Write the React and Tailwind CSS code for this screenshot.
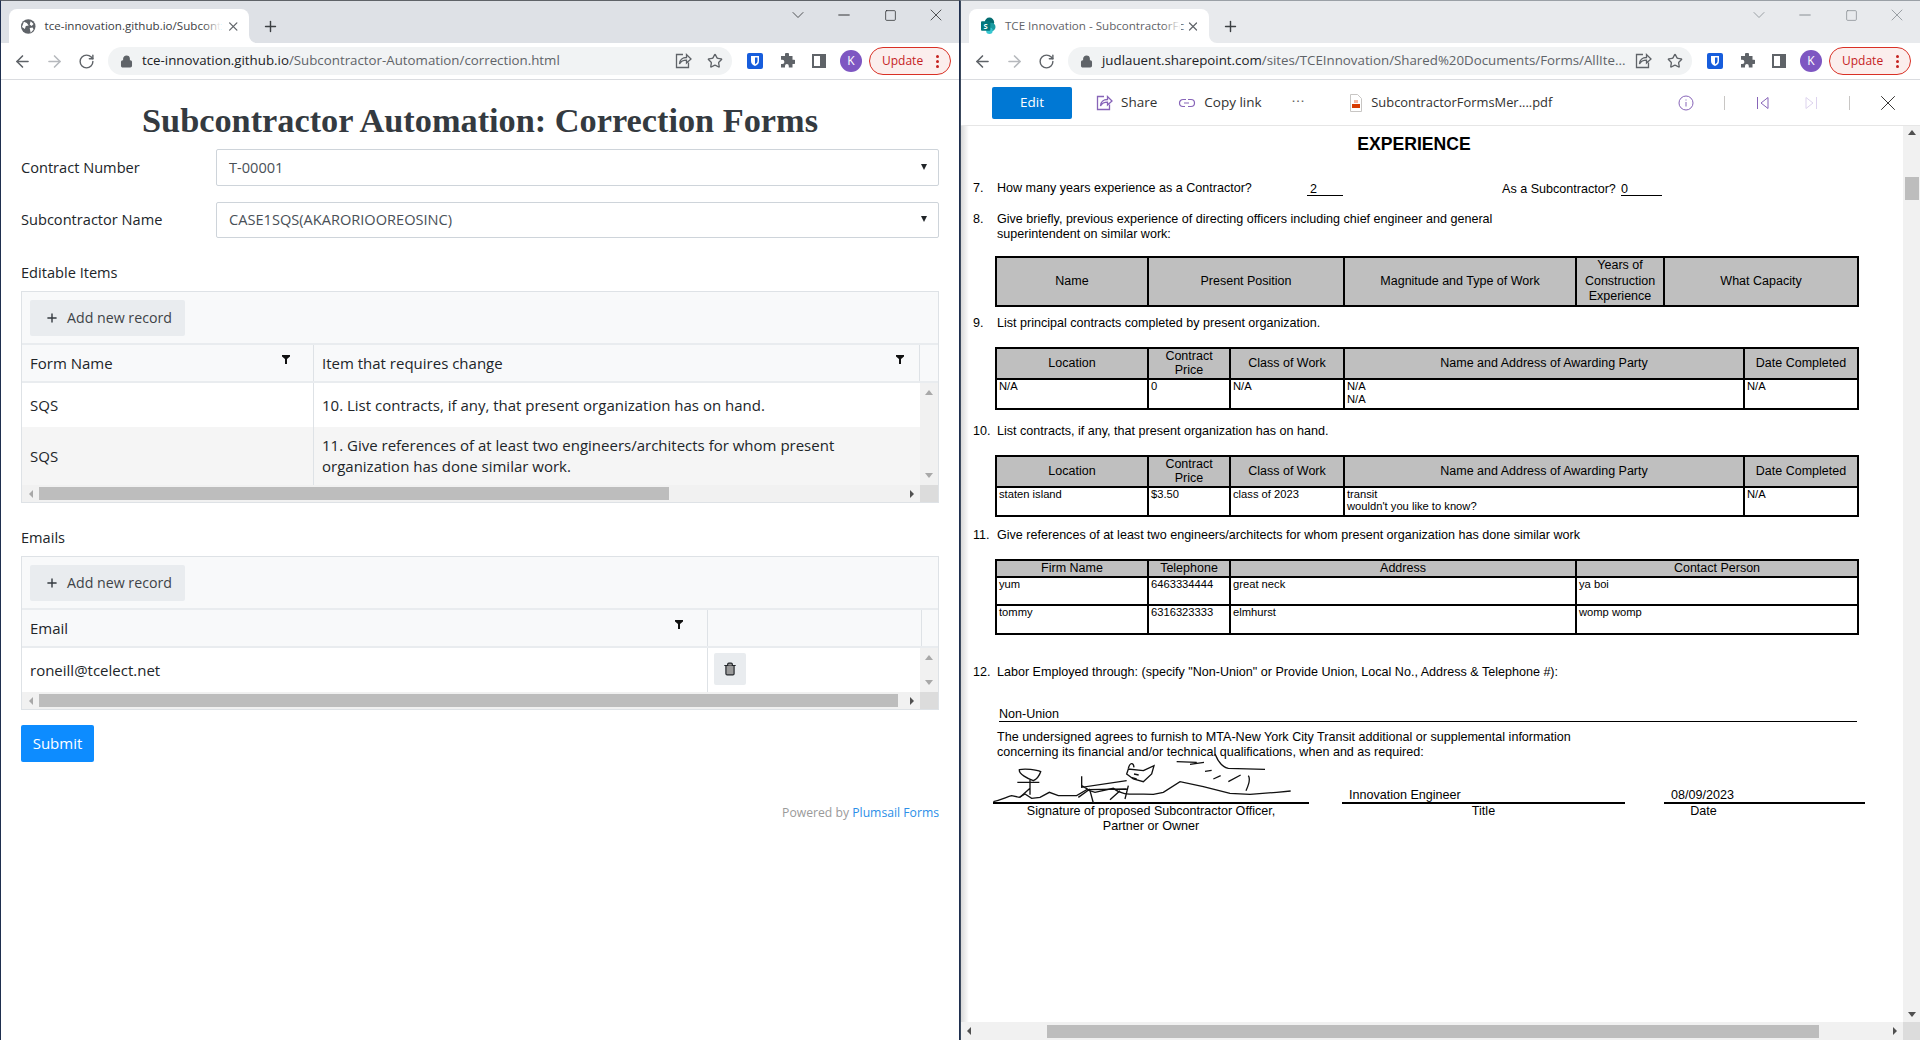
import { ArrowLeft, ArrowRight, RotateCw, Lock, Star, X, Plus, ChevronDown, Minus, Square, Trash2 } from 'lucide-react';

const UI = "font-['Open_Sans','Noto_Sans',sans-serif]";

function Flare({ side, color }) {
  // little inverted corners at the foot of the active tab
  return (
    <span className={side === 'l' ? 'absolute bottom-0 -left-[8px] w-[8px] h-[8px] bg-white' : 'absolute bottom-0 -right-[8px] w-[8px] h-[8px] bg-white'}>
      <span className={side === 'l' ? `block w-full h-full rounded-br-[8px] ${color}` : `block w-full h-full rounded-bl-[8px] ${color}`} />
    </span>
  );
}

function ShareIcon({ className = 'text-[#5f6368]' }) {
  return (
    <svg width="18" height="18" viewBox="0 0 18 18" fill="none" stroke="currentColor" strokeWidth="1.3" className={className}>
      <path d="M9 2.500h-6.500v13h12v-5" />
      <path d="M5.500 12c0-4 3-6.500 7-6.500v-3l4.500 4.500-4.500 4v-2.800c-3 0-5.500 1-7 3.800z" />
    </svg>
  );
}

function Chrome({ active, favicon, tabText, host, path }) {
  const bar = active ? 'bg-[#dee1e6]' : 'bg-[#e8eaed]';
  const ctl = active ? 'text-[#202124]' : 'text-[#80868b]';
  return (
    <div className={UI}>
      <div className={`${bar} h-[42px] flex items-end pl-[8px] relative`}>
        <div className="relative w-[240px] h-[34px] bg-white rounded-t-[8px] flex items-center pl-[12px] pr-[9px]">
          <Flare side="r" color={bar} />
          {favicon}
          <span className={`relative ml-[9px] w-[176px] whitespace-nowrap text-[11.6px] ${active ? 'text-[#3c4043]' : 'text-[#5f6368]'}`}>
            {tabText}
            <span className="absolute right-0 top-0 bottom-0 w-[18px] bg-gradient-to-r from-transparent to-white" />
          </span>
          <X size={15} strokeWidth={2} className="ml-[5px] text-[#5f6368]" />
        </div>
        <Plus size={17} strokeWidth={2} className="ml-[13px] mb-[8px] text-[#3c4043]" />
        <div className={`ml-auto mb-[18px] flex items-center ${ctl}`}>
          <span className="w-[46px] flex justify-center"><ChevronDown size={20} strokeWidth={0.9} /></span>
          <span className="w-[46px] flex justify-center"><Minus size={18} strokeWidth={1.2} /></span>
          <span className="w-[46px] flex justify-center"><Square size={13} strokeWidth={1.3} /></span>
          <span className="w-[46px] flex justify-center"><X size={20} strokeWidth={0.9} /></span>
        </div>
      </div>
      <div className="h-[36px] bg-white flex items-center pl-[12px]">
        <ArrowLeft size={19} strokeWidth={2} className="text-[#5f6368]" />
        <ArrowRight size={19} strokeWidth={2} className="ml-[13px] text-[#b6b9bd]" />
        <RotateCw size={17} strokeWidth={2} className="ml-[14px] text-[#5f6368]" />
        <div className="ml-[13px] w-[624px] h-[28px] rounded-full bg-[#f1f3f4] flex items-center pl-[12px]">
          <Lock size={13} strokeWidth={2.4} fill="#5f6368" className="text-[#5f6368] mr-[9px]" />
          <span className="w-[532px] whitespace-nowrap text-[13.3px] text-[#5f6368]">
            <span className="text-[#202124]">{host}</span>{path}
          </span>
          <ShareIcon />
          <Star size={16} strokeWidth={2} className="ml-[15px] text-[#5f6368]" />
        </div>
        <div className="ml-[7px] w-[32px] flex justify-center">
          <span className="w-[16px] h-[16px] rounded-[2px] bg-[#175ddc] flex items-center justify-center">
            <svg width="10" height="12" viewBox="0 0 10 12"><path d="M1 1h8v5c0 3-2 4-4 5-2-1-4-2-4-5z" fill="#fff" /><path d="M5 2.500h2.500v3.500c0 1.500-1 2.500-2.500 3.200z" fill="#175ddc" /></svg>
          </span>
        </div>
        <div className="w-[32px] flex justify-center">
          <svg width="16" height="16" viewBox="0 0 16 16" fill="#5f6368"><path d="M6 1.500a2 2 0 0 1 4 0V3h3.500v3.800H15a2.100 2.100 0 0 1 0 4.200h-1.500v3.500H9.800V13a1.900 1.900 0 0 0-3.800 0v1.500H2V11h1.300a2.100 2.100 0 0 0 0-4.200H2V3h4z" /></svg>
        </div>
        <div className="w-[32px] flex justify-center">
          <span className="w-[14px] h-[14px] border-[2px] border-[#5f6368] border-r-[6px] block" />
        </div>
        <div className="w-[32px] flex justify-center">
          <span className="w-[22px] h-[22px] rounded-full bg-[#7e57c2] text-white text-[12px] flex items-center justify-center">K</span>
        </div>
        <div className="ml-[2px] w-[82px] h-[28px] rounded-full border border-[#d93025] bg-[#fbeeed] flex items-center pl-[12px] text-[12px] text-[#c5221f]">
          Update
          <span className="ml-[13px] flex flex-col gap-[2px]">
            <span className="w-[3px] h-[3px] rounded-full bg-[#c5221f]" />
            <span className="w-[3px] h-[3px] rounded-full bg-[#c5221f]" />
            <span className="w-[3px] h-[3px] rounded-full bg-[#c5221f]" />
          </span>
        </div>
      </div>
      <div className="h-[1px] bg-[#dadce0]" />
    </div>
  );
}

function Funnel({ className = '' }) {
  return (
    <svg width="8" height="9" viewBox="0 0 8 9" className={className}><path d="M0 0h8v1.500L5 4v5H3V4L0 1.500z" fill="#111" /></svg>
  );
}

function Select({ value, className }) {
  return (
    <div className={`flex-1 border border-[#ced4da] rounded-[2px] flex items-center pl-[12px] pr-[11px] text-[#495057] ${className}`}>
      <span>{value}</span>
      <span className="ml-auto mb-[2px] w-0 h-0 border-x-[3.5px] border-x-transparent border-t-[6px] border-t-[#212529]" />
    </div>
  );
}

function Tri({ dir }) {
  const shapes = {
    up: 'border-x-[4px] border-x-transparent border-b-[5px] border-b-[#a8a8a8]',
    down: 'border-x-[4px] border-x-transparent border-t-[5px] border-t-[#a8a8a8]',
    left: 'border-y-[4px] border-y-transparent border-r-[4px] border-r-[#a8a8a8]',
    right: 'border-y-[4px] border-y-transparent border-l-[4px] border-l-[#505050]',
  };
  return <span className={`block w-0 h-0 ${shapes[dir]}`} />;
}

function HScroll({ thumb }) {
  return (
    <div className="h-[17px] flex bg-[#f1f1f1]">
      <div className="flex-1 flex items-center relative pl-[7px] pr-[6px]">
        <Tri dir="left" />
        <div className="ml-[6px] h-[13px] bg-[#bdbdbd]" style={{ width: thumb }} />
        <span className="ml-auto"><Tri dir="right" /></span>
      </div>
      <div className="w-[18px] bg-[#dcdcdc]" />
    </div>
  );
}

function AddRecord() {
  return (
    <div className="h-[53px] pt-[8px] pl-[8px] bg-[#f8f9fa] border-b-2 border-[#e9ecef]">
      <div className="w-[155px] h-[36px] bg-[#e9ecef] rounded-[2px] flex items-center pl-[15px] text-[14.2px] text-[#3e4347]">
        <Plus size={14} strokeWidth={2.4} className="text-[#343a40]" />
        <span className="ml-[8px]">Add new record</span>
      </div>
    </div>
  );
}

function VScroll({ height }) {
  return (
    <div className="w-[18px] bg-[#f1f1f1] flex flex-col items-center justify-between py-[7px]" style={{ height }}>
      <Tri dir="up" />
      <Tri dir="down" />
    </div>
  );
}

function FormSide() {
  return (
    <div className={`flex-1 px-[20px] pt-[19px] bg-white text-[16px] text-[#212529] ${UI}`}>
      <h1 className="text-center font-['Liberation_Serif',serif] font-bold text-[34.3px] leading-[43px] text-[#343a40]">Subcontractor Automation: Correction Forms</h1>
      <div className="mt-[7px] flex items-center">
        <span className="w-[195px] text-[14.6px]">Contract Number</span>
        <Select value="T-00001" className="h-[37px] text-[14.6px]" />
      </div>
      <div className="mt-[16px] flex items-center">
        <span className="w-[195px] text-[14.6px]">Subcontractor Name</span>
        <Select value="CASE1SQS(AKARORIOOREOSINC)" className="h-[36px] text-[14.6px]" />
      </div>

      <div className="mt-[22px] h-[24px] leading-[24px] text-[14.6px]">Editable Items</div>
      <div className="mt-[7px] border border-[#dee2e6] text-[15px] leading-[26px]">
        <AddRecord />
        <div className="h-[38px] flex bg-[#f8f9fa] border-b-2 border-[#e9ecef]">
          <div className="w-[292px] pl-[8px] border-r border-[#dee2e6] flex items-center relative">
            Form Name
            <Funnel className="absolute right-[23px] top-[10px]" />
          </div>
          <div className="w-[606px] pl-[8px] border-r border-[#dee2e6] flex items-center relative">
            Item that requires change
            <Funnel className="absolute right-[15px] top-[10px]" />
          </div>
        </div>
        <div className="flex">
          <div className="w-[898px]">
            <div className="h-[44px] flex items-center">
              <div className="w-[292px] h-full pl-[8px] flex items-center border-r border-[#dee2e6]">SQS</div>
              <div className="pl-[8px]">10. List contracts, if any, that present organization has on hand.</div>
            </div>
            <div className="h-[58px] flex items-center bg-[#f5f5f5]">
              <div className="w-[292px] h-full pl-[8px] flex items-center border-r border-[#dee2e6]">SQS</div>
              <div className="pl-[8px] w-[606px] leading-[21px]">11. Give references of at least two engineers/architects for whom present organization has done similar work.</div>
            </div>
          </div>
          <VScroll height={102} />
        </div>
        <HScroll thumb={630} />
      </div>

      <div className="mt-[22px] h-[24px] leading-[24px] text-[14.6px]">Emails</div>
      <div className="mt-[7px] border border-[#dee2e6] text-[15px] leading-[26px]">
        <AddRecord />
        <div className="h-[38px] flex bg-[#f8f9fa] border-b-2 border-[#e9ecef]">
          <div className="w-[686px] pl-[8px] border-r border-[#dee2e6] flex items-center relative">
            Email
            <Funnel className="absolute right-[24px] top-[10px]" />
          </div>
          <div className="w-[214px] border-r border-[#dee2e6]" />
        </div>
        <div className="flex">
          <div className="w-[686px] h-[44px] pl-[8px] flex items-center border-r border-[#dee2e6]">roneill@tcelect.net</div>
          <div className="w-[212px] h-[44px] pl-[6px] pt-[5px]">
            <div className="w-[32px] h-[32px] bg-[#e9ecef] rounded-[2px] flex items-center justify-center">
              <Trash2 size={14} strokeWidth={2} fill="#9a9a9a" className="text-[#212529]" />
            </div>
          </div>
          <VScroll height={44} />
        </div>
        <HScroll thumb={859} />
      </div>

      <button className="mt-[15px] block w-[73px] h-[37px] rounded-[2px] bg-[#0d8cff] text-white text-[15px] font-medium">Submit</button>
      <div className="mt-[39px] h-[24px] leading-[24px] text-right text-[12.2px] text-[#9a9a9a]">
        Powered by <span className="text-[#2b8fe8]">Plumsail Forms</span>
      </div>
    </div>
  );
}

function PdfTable({ cols, rows, head, headH, bodyH, leading = 'leading-[13.5px]' }) {
  return (
    <table className="ml-[22px] w-[862px] table-fixed border-collapse">
      <colgroup>{cols.map((w, i) => <col key={i} style={{ width: w }} />)}</colgroup>
      <thead>
        <tr style={{ height: headH }} className="bg-[#bfbfbf]">
          {head.map((h, i) => (
            <th key={i} className="border-2 border-black text-center font-normal text-[12.5px] leading-[14.5px]">{h}</th>
          ))}
        </tr>
      </thead>
      <tbody>
        {rows.map((r, ri) => (
          <tr key={ri} style={{ height: bodyH }}>
            {r.map((c, i) => <td key={i} className={`border-2 border-black align-top px-[2px] text-[11.2px] ${leading} whitespace-pre-line`}>{c}</td>)}
          </tr>
        ))}
      </tbody>
    </table>
  );
}

function Q({ n, children, className = '' }) {
  return (
    <div className={`flex leading-[15px] ${className}`}>
      <span className="w-[24px]">{n}</span>
      <div className="flex-1">{children}</div>
    </div>
  );
}

function Signature() {
  return (
    <svg width="360" height="110" viewBox="0 0 1080 330" fill="none" stroke="#111" strokeWidth="4" className="absolute left-[7px] top-[-31px]">
      <path d="M40 218c25-6 40-14 55-18l23 5 17-10 20 13 25-3 28-15 27 10h55l30-18 25 8 55-12c30 25 60 15 120 18l30-6 50-32 70 15 80 20 60 3 80-6 42-4" />
      <path d="M118 122c17-4 52 0 64 6-4 12-12 22-22 27-15-5-45-20-42-33z" />
      <path d="M112 160h66M150 152v45M150 178l-30 27" />
      <path d="M305 142v33l135-20M305 170l20 12 115-2M330 180l-35 25M330 185l10 37M445 170l-10 40M420 185l-30 27" />
      <path d="M490 125l32-15-7 25-25 23-30-8-20-15 5-15 45 5z" />
      <path d="M445 118c5-18 15-18 17-3M462 135l14 3M470 150l-14-4" />
      <path d="M705 75c10 25 25 40 40 43l110 3" />
      <path d="M590 98l60 2M630 106l42-6M675 127l20-3M700 150l22-10M745 158l37-20M805 140c7 10 0 30-7 45" />
    </svg>
  );
}

function PdfSide() {
  const headA = ['Location', 'Contract\nPrice', 'Class of Work', 'Name and Address of Awarding Party', 'Date Completed'].map(t => <span className="whitespace-pre-line">{t}</span>);
  const colsA = [152, 82, 114, 400, 114];
  return (
    <div className={`flex-1 flex flex-col min-h-0 bg-white ${UI}`}>
      <div className="h-[46px] border-b border-[#e6e6e6] flex items-center pl-[31px] text-[13.5px] text-[#323130]">
        <div className="w-[80px] h-[32px] rounded-[2px] bg-[#0078d4] text-white flex items-center justify-center">Edit</div>
        <ShareIcon className="ml-[23px] text-[#8764b8]" />
        <span className="ml-[8px]">Share</span>
        <svg width="18" height="14" viewBox="0 0 18 14" fill="none" stroke="#8764b8" strokeWidth="1.2" className="ml-[21px]">
          <path d="M8 3.500H5a3.500 3.500 0 0 0 0 7h2" /><path d="M6 7h5M10 3.500h3a3.500 3.500 0 0 1 0 7h-3" />
        </svg>
        <span className="ml-[8px]">Copy link</span>
        <span className="ml-[30px] mb-[2px] tracking-[1px] text-[#605e5c]">···</span>
        <svg width="14" height="18" viewBox="0 0 14 18" className="ml-[44px]">
          <path d="M1.500.5h7l4 4v13h-11z" fill="#fff" stroke="#c8c6c4" />
          <rect x="3" y="10" width="8" height="4" fill="#d83b01" />
          <rect x="5" y="6" width="4" height="3" fill="#f3b7a5" />
        </svg>
        <span className="ml-[8px] text-[12.9px]">SubcontractorFormsMer....pdf</span>
        <div className="ml-auto pr-[19px] flex items-center">
          <svg width="16" height="16" viewBox="0 0 16 16" fill="none" stroke="#8764b8">
            <circle cx="8" cy="8" r="7" /><path d="M8 7v4.500M8 4.500v1" />
          </svg>
          <span className="ml-[30px] w-[1px] h-[14px] bg-[#c8c6c4]" />
          <svg width="14" height="14" viewBox="0 0 14 14" fill="none" stroke="#8764b8" className="ml-[31px]">
            <path d="M1.500 1v12M12 1.500L5 7l7 5.500z" />
          </svg>
          <svg width="14" height="14" viewBox="0 0 14 14" fill="none" stroke="#ddd3ee" className="ml-[34px]">
            <path d="M12.500 1v12M2 1.500L9 7l-7 5.500z" />
          </svg>
          <span className="ml-[31px] w-[1px] h-[14px] bg-[#c8c6c4]" />
          <X size={26} strokeWidth={0.9} className="ml-[25px] text-[#323130]" />
        </div>
      </div>

      <div className="flex-1 min-h-0 flex relative">
        <div className="absolute left-0 top-0 bottom-0 w-[8px] bg-gradient-to-r from-black/15 to-transparent" />
        <div className="flex-1 pl-[12px] font-['Liberation_Sans',Arial,sans-serif] text-[12.57px] text-black">
          <div className="mt-[7px] h-[22px] leading-[22px] text-center text-[17.6px] font-bold w-[882px]">EXPERIENCE</div>
          <Q n="7." className="mt-[26px] h-[15px]">
            <div className="flex h-[15px]">
              <span className="w-[310px]">How many years experience as a Contractor?</span>
              <span className="w-[36px] h-[15px] border-b border-black pl-[3px] leading-[16px]">2</span>
              <span className="ml-[159px] w-[119px] leading-[17px]">As a Subcontractor?</span>
              <span className="w-[41px] h-[15px] border-b border-black leading-[16px]">0</span>
            </div>
          </Q>
          <Q n="8." className="mt-[16px]">Give briefly, previous experience of directing officers including chief engineer and general<br />superintendent on similar work:</Q>
          <div className="mt-[14px]">
            <PdfTable cols={[152, 196, 232, 88, 194]} headH={47} rows={[]} head={['Name', 'Present Position', 'Magnitude and Type of Work', <span className="block leading-[15.5px]">Years of<br />Construction<br />Experience</span>, 'What Capacity']} />
          </div>
          <Q n="9." className="mt-[9px]">List principal contracts completed by present organization.</Q>
          <div className="mt-[16px]">
            <PdfTable cols={colsA} head={headA} headH={29} bodyH={30} rows={[['N/A', '0', 'N/A', 'N/A\nN/A', 'N/A']]} />
          </div>
          <Q n="10." className="mt-[14px]">List contracts, if any, that present organization has on hand.</Q>
          <div className="mt-[16px]">
            <PdfTable cols={colsA} head={headA} headH={29} bodyH={29} leading="leading-[12px]" rows={[['staten island', '$3.50', 'class of 2023', "transit\nwouldn't you like to know?", 'N/A']]} />
          </div>
          <Q n="11." className="mt-[11px]">Give references of at least two engineers/architects for whom present organization has done similar work</Q>
          <div className="mt-[16px]">
            <PdfTable cols={[152, 82, 346, 282]} headH={17} bodyH={28.5} head={['Firm Name', 'Telephone', 'Address', 'Contact Person']} rows={[['yum', '6463334444', 'great neck', 'ya boi'], ['tommy', '6316323333', 'elmhurst', 'womp womp']]} />
          </div>
          <Q n="12." className="mt-[30px]">Labor Employed through: (specify "Non-Union" or Provide Union, Local No., Address &amp; Telephone #):</Q>
          <div className="mt-[28px] ml-[26px] w-[858px] h-[13px] leading-[13px] border-b border-black box-content">Non-Union</div>
          <div className="mt-[8px] ml-[24px] leading-[15px]">The undersigned agrees to furnish to MTA-New York City Transit additional or supplemental information<br />concerning its financial and/or technical qualifications, when and as required:</div>
          <div className="relative flex h-[44px] items-end">
            <Signature />
            <div className="ml-[20px] w-[316px] border-b-2 border-black" />
            <div className="ml-[33px] w-[283px] border-b-2 border-black pl-[7px] leading-[14px]">Innovation Engineer</div>
            <div className="ml-[39px] w-[201px] border-b-2 border-black pl-[7px] leading-[14px]">08/09/2023</div>
          </div>
          <div className="flex leading-[15px]">
            <div className="ml-[20px] w-[316px] text-center">Signature of proposed Subcontractor Officer,<br />Partner or Owner</div>
            <div className="ml-[33px] w-[283px] text-center">Title</div>
            <div className="ml-[39px] w-[79px] text-center">Date</div>
          </div>
        </div>
        <div className="w-[17px] bg-[#f1f1f1] flex flex-col items-center pt-[4px] pb-[5px]">
          <span className="block w-0 h-0 border-x-[4px] border-x-transparent border-b-[5px] border-b-[#505050]" />
          <div className="mt-[42px] w-[14px] h-[23px] bg-[#bdbdbd]" />
          <span className="mt-auto block w-0 h-0 border-x-[4px] border-x-transparent border-t-[5px] border-t-[#505050]" />
        </div>
      </div>

      <div className="h-[18px] flex bg-[#f1f1f1]">
        <div className="flex-1 flex items-center pl-[6px] pr-[6px]">
          <span className="block w-0 h-0 border-y-[4px] border-y-transparent border-r-[4px] border-r-[#505050]" />
          <div className="ml-[76px] w-[772px] h-[13px] bg-[#bdbdbd]" />
          <span className="ml-auto block w-0 h-0 border-y-[4px] border-y-transparent border-l-[4px] border-l-[#505050]" />
        </div>
        <div className="w-[17px] bg-[#dcdcdc]" />
      </div>
    </div>
  );
}

export default function App() {
  return (
    <div className="w-[1920px] h-[1040px] flex overflow-hidden bg-white">
      <div className="w-[960px] h-full flex flex-col border-t border-t-[#5f6368] border-x border-x-[#1f2f4f]">
        <Chrome
          active
          tabText="tce-innovation.github.io/Subcont"
          host="tce-innovation.github.io"
          path="/Subcontractor-Automation/correction.html"
          favicon={
            <svg width="15" height="15" viewBox="0 0 15 15">
              <circle cx="7.500" cy="7.500" r="7.500" fill="#5f6368" />
              <path d="M3 2.500l3 1.500 2 2.500-3 .5-1 3-3-2zM10 2l3 3-2 2-2-1.500zM9 9l3-.5 1 2-3 3.500z" fill="#fff" />
            </svg>
          }
        />
        <FormSide />
      </div>
      <div className="w-[960px] h-full flex flex-col border-t border-t-[#9aa0a6] border-l border-l-[#3c4a5e]">
        <Chrome
          tabText="TCE Innovation - SubcontractorFc"
          host="judlauent.sharepoint.com"
          path="/sites/TCEInnovation/Shared%20Documents/Forms/AllIte..."
          favicon={
            <svg width="16" height="18" viewBox="0 0 16 18">
              <circle cx="9" cy="5" r="5" fill="#036c70" />
              <circle cx="11" cy="10" r="4.500" fill="#1a9ba1" />
              <circle cx="9" cy="14" r="3.500" fill="#37c6d0" />
              <rect x="0" y="4" width="10" height="10" rx="1" fill="#03787c" />
              <text x="5" y="12" textAnchor="middle" fontSize="8" fontWeight="700" fill="#fff" fontFamily="Open Sans, sans-serif">S</text>
            </svg>
          }
        />
        <PdfSide />
      </div>
    </div>
  );
}
